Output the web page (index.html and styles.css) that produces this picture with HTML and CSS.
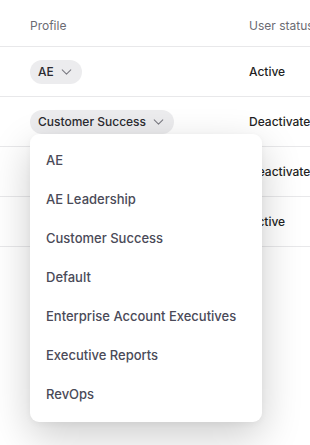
FILE: index.html
```html
<!DOCTYPE html>
<html lang="en">
<head>
  <meta charset="UTF-8" />
  <meta name="viewport" content="width=device-width, initial-scale=1.0" />
  <title>Users</title>
  <link rel="stylesheet" href="styles.css">
</head>
<body>
  <div class="table">
    <div class="row header">
      <div class="cell profile">Profile</div>
      <div class="cell status">User status</div>
    </div>
    <div class="row">
      <div class="cell profile">
        <button class="pill">AE
          <svg class="chevron" viewBox="0 0 12 7" width="11" height="6"><path d="M1 1l5 5 5-5" fill="none" stroke="currentColor" stroke-width="1.2" stroke-linecap="round" stroke-linejoin="round"/></svg>
        </button>
      </div>
      <div class="cell status">Active</div>
    </div>
    <div class="row">
      <div class="cell profile">
        <div class="picker">
          <button class="pill">Customer Success
            <svg class="chevron" viewBox="0 0 12 7" width="11" height="6"><path d="M1 1l5 5 5-5" fill="none" stroke="currentColor" stroke-width="1.2" stroke-linecap="round" stroke-linejoin="round"/></svg>
          </button>
          <ul class="menu">
            <li>AE</li>
            <li>AE Leadership</li>
            <li>Customer Success</li>
            <li>Default</li>
            <li>Enterprise Account Executives</li>
            <li>Executive Reports</li>
            <li>RevOps</li>
          </ul>
        </div>
      </div>
      <div class="cell status">Deactivated</div>
    </div>
    <div class="row">
      <div class="cell profile">
        <button class="pill">Default
          <svg class="chevron" viewBox="0 0 12 7" width="11" height="6"><path d="M1 1l5 5 5-5" fill="none" stroke="currentColor" stroke-width="1.2" stroke-linecap="round" stroke-linejoin="round"/></svg>
        </button>
      </div>
      <div class="cell status">Deactivated</div>
    </div>
    <div class="row">
      <div class="cell profile">
        <button class="pill">RevOps
          <svg class="chevron" viewBox="0 0 12 7" width="11" height="6"><path d="M1 1l5 5 5-5" fill="none" stroke="currentColor" stroke-width="1.2" stroke-linecap="round" stroke-linejoin="round"/></svg>
        </button>
      </div>
      <div class="cell status">Active</div>
    </div>
  </div>
</body>
</html>
```

FILE: styles.css
```css
* {
  box-sizing: border-box;
  margin: 0;
  padding: 0;
}

html {
  overflow: hidden;
}

body {
  font-family: 'Inter', sans-serif;
  background: #ffffff;
  color: #1f1f24;
  min-height: 100vh;
}

.table {
  width: 420px;
}

.row {
  display: flex;
  align-items: center;
  height: 50px;
  border-bottom: 1px solid #e8e8ea;
  padding-left: 30px;
}

.row.header {
  height: 47px;
  padding-top: 5px;
}

.cell {
  font-size: 12px;
}

.profile {
  width: 219px;
}

.status {
  font-weight: 500;
  white-space: nowrap;
}

.header .cell {
  color: #6b6b73;
  font-weight: 400;
}

.picker {
  position: relative;
}

.pill {
  display: inline-flex;
  align-items: center;
  gap: 7px;
  height: 24px;
  padding: 0 10px 0 8px;
  border: none;
  border-radius: 12px;
  background: #ececee;
  color: #2a2a30;
  font-family: inherit;
  font-size: 12px;
  font-weight: 500;
}

.chevron {
  color: #7a7a82;
}

.menu {
  position: absolute;
  top: 24px;
  left: 0;
  z-index: 2;
  width: 232px;
  list-style: none;
  background: #ffffff;
  border-radius: 9px;
  padding: 7px 0 8px;
  box-shadow: 0 14px 40px rgba(0, 0, 0, 0.2), 0 2px 6px rgba(0, 0, 0, 0.04);
}

.menu li {
  height: 39px;
  line-height: 39px;
  padding-left: 16px;
  font-size: 13px;
  font-weight: 500;
  color: #4a4a58;
}
```
